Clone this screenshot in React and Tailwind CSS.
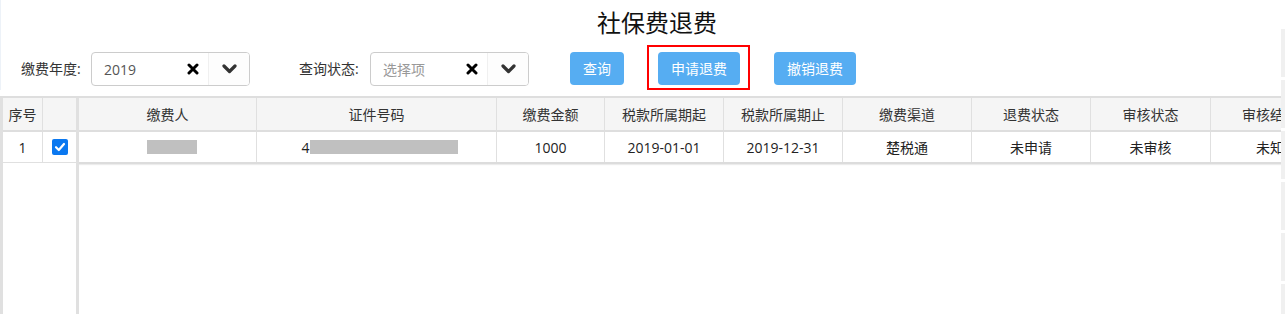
import React from "react";

const cols = [
  { t: "缴费人", w: "w-[178px]" },
  { t: "证件号码", w: "w-[240px]" },
  { t: "缴费金额", w: "w-[108px]" },
  { t: "税款所属期起", w: "w-[119px]" },
  { t: "税款所属期止", w: "w-[119px]" },
  { t: "缴费渠道", w: "w-[129px]" },
  { t: "退费状态", w: "w-[119px]" },
  { t: "审核状态", w: "w-[120px]" },
  { t: "审核结果", w: "w-[119px]" },
];

function XIcon() {
  return (
    <svg width="12" height="12" viewBox="0 0 12 12">
      <path d="M2 2 L10 10 M10 2 L2 10" stroke="#000" strokeWidth="3" strokeLinecap="round" />
    </svg>
  );
}

function Chevron() {
  return (
    <svg width="15" height="10" viewBox="0 0 15 10">
      <path d="M2 2 L7.5 7.5 L13 2" fill="none" stroke="#333" strokeWidth="3.2" strokeLinecap="round" strokeLinejoin="round" />
    </svg>
  );
}

function Select({ value, placeholder }) {
  return (
    <div className="mt-[7px] w-[159px] h-[34px] flex border border-[#ccc] rounded-[4px] overflow-hidden bg-white">
      <div className="w-[116px] flex items-center justify-between pl-[12px] pr-[9px]">
        {value ? (
          <span className="text-[14px] text-[#555]">{value}</span>
        ) : (
          <span className="text-[14px] text-[#999]">{placeholder}</span>
        )}
        <XIcon />
      </div>
      <div className="flex-1 flex items-center justify-center border-l border-[#f0f0f0] bg-[#fdfdfd]">
        <Chevron />
      </div>
    </div>
  );
}

function Btn({ children, className = "" }) {
  return (
    <div className={"h-[33px] w-[82px] rounded-[4px] bg-[#56adf2] text-white text-[14px] flex items-center justify-center " + className}>
      {children}
    </div>
  );
}

export default function App() {
  return (
    <div className="w-[1285px] h-[314px] overflow-hidden bg-white flex font-['Open_Sans','Noto_Sans_CJK_SC',sans-serif] text-[#333]">
      <div className="w-[1281px] flex flex-col">
        <div className="border-l border-[#edf2f8]">
          <div className="h-[45px] pt-[6px] flex justify-center pl-[32px]">
            <h1 className="text-[24px] leading-[34px] text-[#111]">社保费退费</h1>
          </div>
          <div className="h-[45px] flex items-start pl-[20px]">
            <div className="mt-[7px] w-[70px] leading-[34px] text-[14px] text-[#333]">缴费年度:</div>
            <Select value="2019" />
            <div className="ml-[49px] mt-[7px] w-[71px] leading-[34px] text-[14px] text-[#333]">查询状态:</div>
            <Select placeholder="选择项" />
            <Btn className="ml-[41px] mt-[7px] !w-[54px]">查询</Btn>
            <div className="ml-[23px] w-[103px] h-[45px] border-2 border-[#f00] pl-[9px] pt-[5px]">
              <Btn>申请退费</Btn>
            </div>
            <Btn className="ml-[24px] mt-[7px]">撤销退费</Btn>
          </div>
        </div>

        <div className="mt-[6px] h-[218px] flex border-t-2 border-[#dedede]">
          {/* frozen left */}
          <div className="w-[79px] shrink-0 flex flex-col border-l-[3px] border-r-[3px] border-[#e0e0e0]">
            <div className="h-[34px] flex bg-[#f5f5f5] border-b-2 border-[#dedede] text-[14px]">
              <div className="w-[39px] flex items-center justify-center">序号</div>
              <div className="flex-1 border-l border-[#e0e0e0]"></div>
            </div>
            <div className="h-[31px] flex border-b border-[#e0e0e0] text-[14px] text-[#222]">
              <div className="w-[39px] flex items-center justify-center">1</div>
              <div className="flex-1 border-l border-[#e0e0e0] flex items-center justify-center">
                <div className="w-[16px] h-[16px] rounded-[2px] bg-[#0a78f0] flex items-center justify-center">
                  <svg width="12" height="12" viewBox="0 0 12 12">
                    <path d="M2 6.2 L4.8 9 L10 3" fill="none" stroke="#fff" strokeWidth="2.2" strokeLinecap="round" strokeLinejoin="round" />
                  </svg>
                </div>
              </div>
            </div>
            <div className="flex-1"></div>
          </div>
          {/* main */}
          <div className="flex-1 overflow-hidden">
            <div className="w-[1251px] flex flex-col">
              <div className="h-[34px] flex bg-[#f5f5f5] border-b-2 border-[#dedede] text-[14px]">
                {cols.map((c, i) => (
                  <div key={i} className={c.w + " shrink-0 flex items-center justify-center border-r border-[#e0e0e0] whitespace-nowrap"}>
                    {c.t}
                  </div>
                ))}
              </div>
              <div className="h-[32px] flex border-b-2 border-[#dcdcdc] shadow-[0_1px_1px_#ececec] text-[14px] text-[#222]">
                <div className="w-[178px] shrink-0 flex items-center justify-center border-r border-[#e0e0e0]">
                  <div className="ml-[8px] w-[50px] h-[14px] bg-[#c0c0c0]"></div>
                </div>
                <div className="w-[240px] shrink-0 flex items-center justify-center border-r border-[#e0e0e0]">
                  <span className="ml-[6px]">4</span>
                  <div className="w-[148px] h-[14px] bg-[#c0c0c0]"></div>
                </div>
                <div className="w-[108px] shrink-0 flex items-center justify-center border-r border-[#e0e0e0]">1000</div>
                <div className="w-[119px] shrink-0 flex items-center justify-center border-r border-[#e0e0e0]">2019-01-01</div>
                <div className="w-[119px] shrink-0 flex items-center justify-center border-r border-[#e0e0e0]">2019-12-31</div>
                <div className="w-[129px] shrink-0 flex items-center justify-center border-r border-[#e0e0e0]">楚税通</div>
                <div className="w-[119px] shrink-0 flex items-center justify-center border-r border-[#e0e0e0]">未申请</div>
                <div className="w-[120px] shrink-0 flex items-center justify-center border-r border-[#e0e0e0]">未审核</div>
                <div className="w-[119px] shrink-0 flex items-center justify-center border-r border-[#e0e0e0]">未知</div>
              </div>
            </div>
          </div>
        </div>
      </div>
      <div className="w-[4px] flex flex-col gap-[3px] pt-[29px]">
        <div className="h-[48px] shrink-0 bg-[#f0f0f0]"></div>
        <div className="h-[48px] shrink-0 bg-[#f0f0f0]"></div>
        <div className="h-[48px] shrink-0 bg-[#f0f0f0]"></div>
        <div className="h-[48px] shrink-0 bg-[#f0f0f0]"></div>
        <div className="h-[48px] shrink-0 bg-[#f0f0f0]"></div>
        <div className="h-[48px] shrink-0 bg-[#f0f0f0]"></div>
      </div>
    </div>
  );
}
